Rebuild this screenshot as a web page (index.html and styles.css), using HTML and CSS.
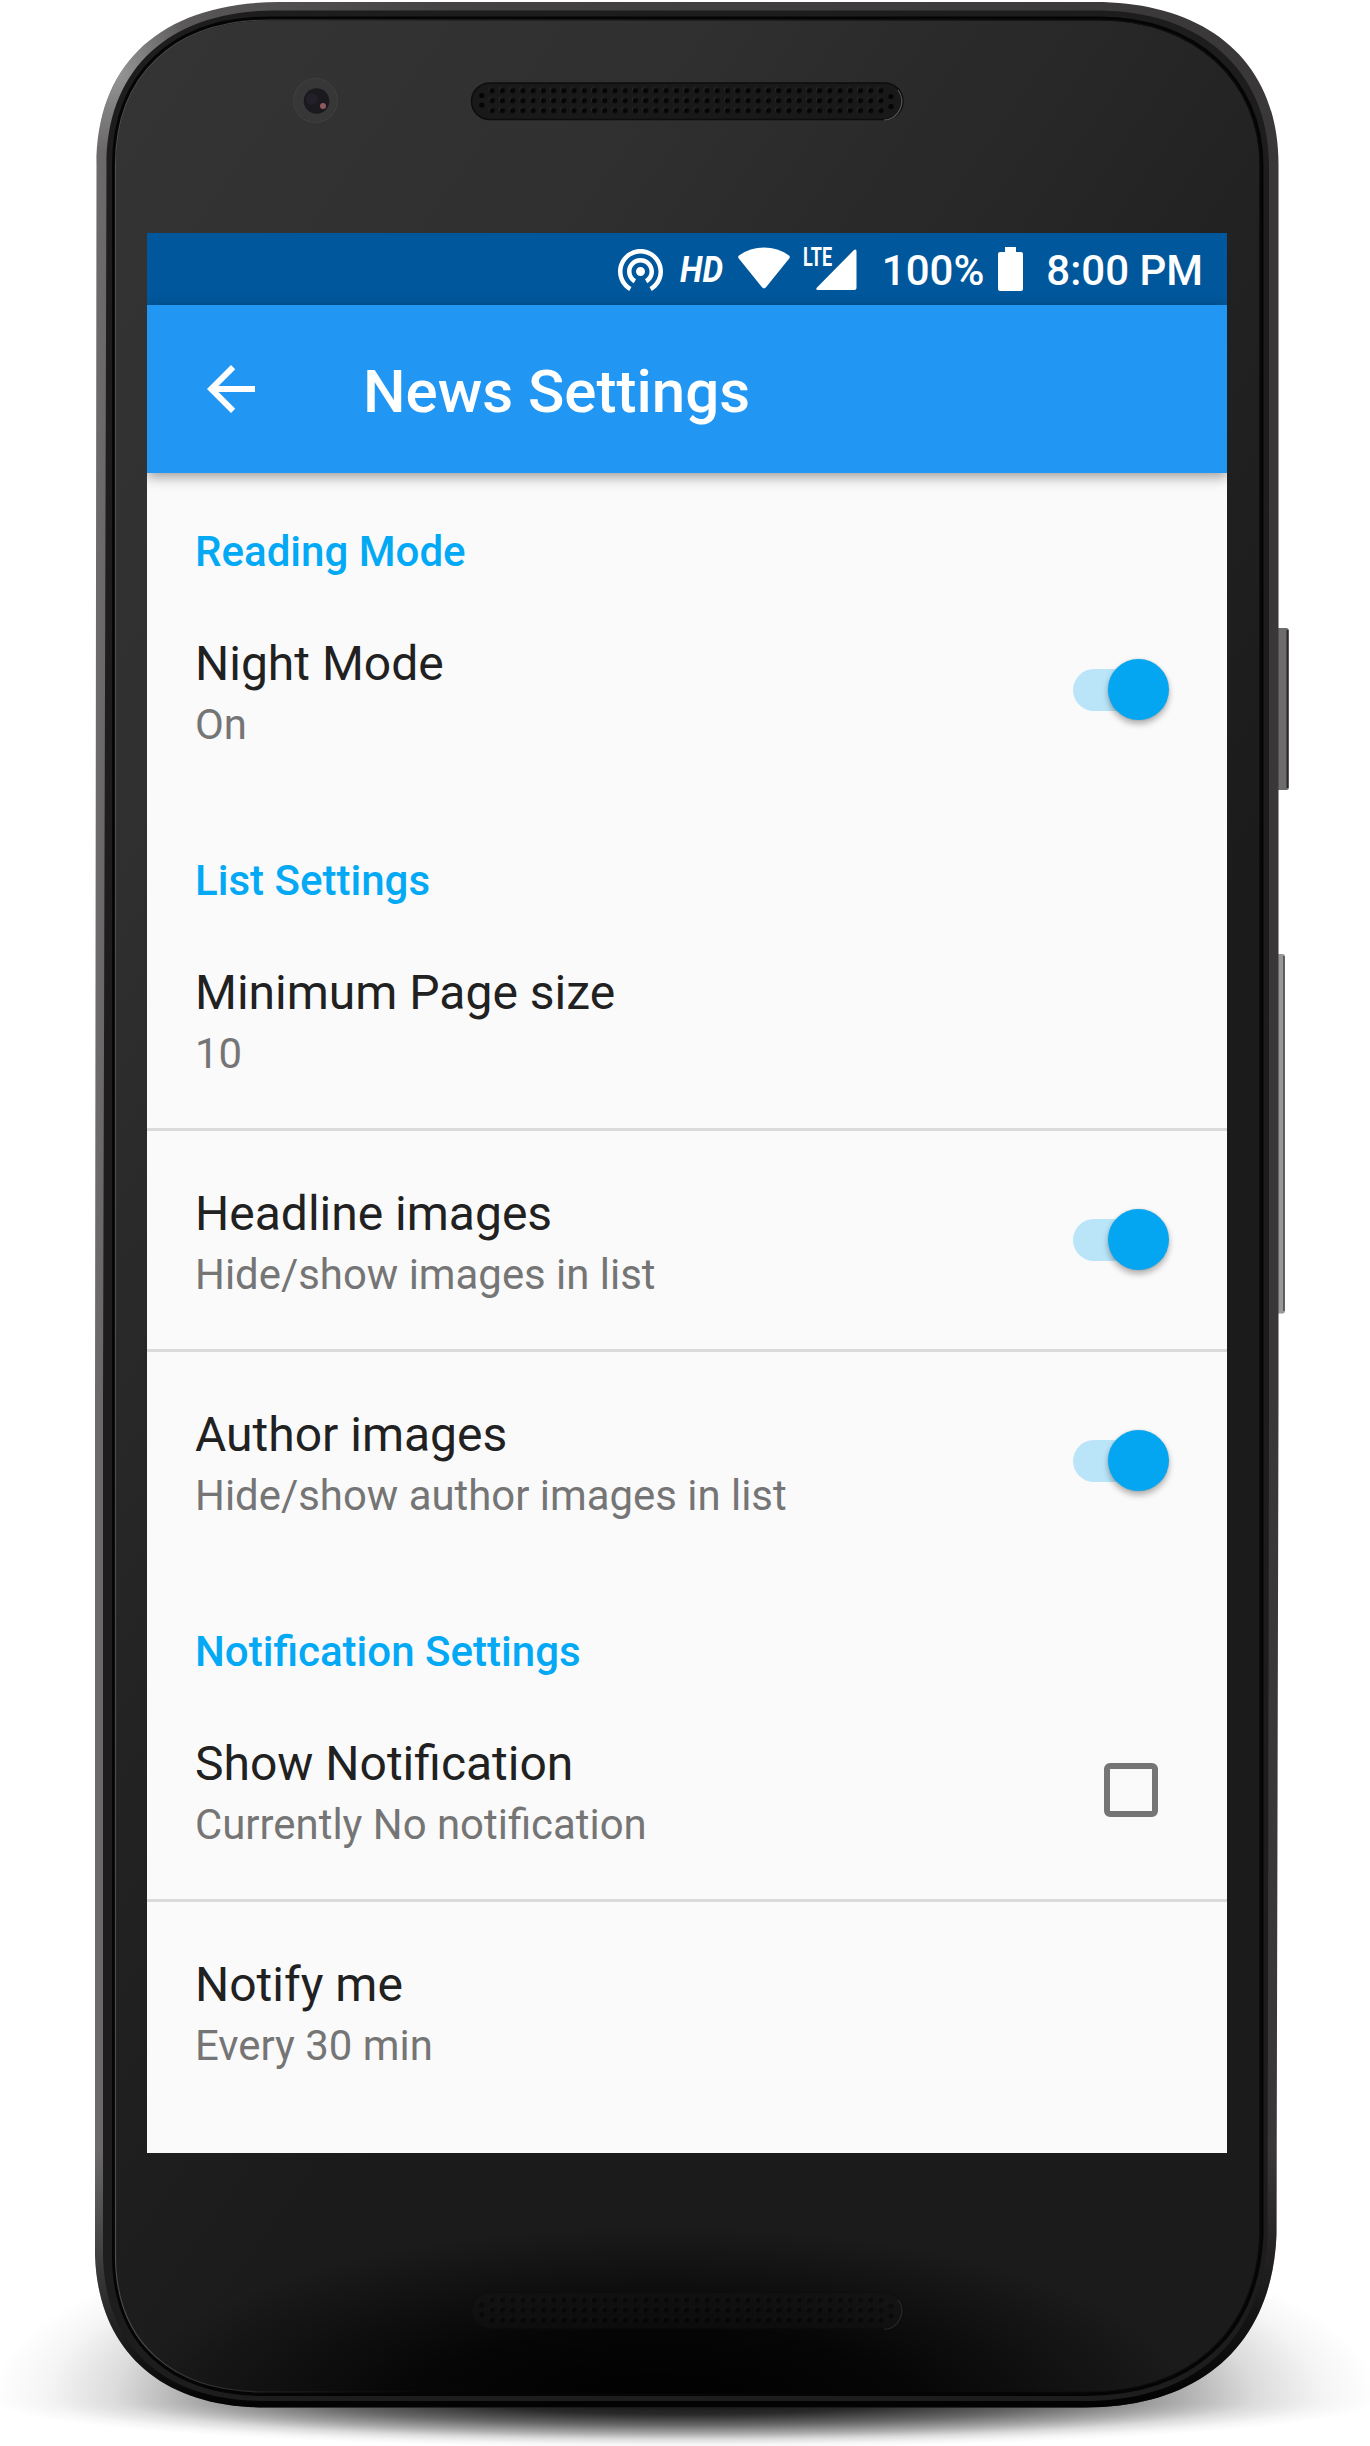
FILE: index.html
```html
<!DOCTYPE html>
<html lang="en">
<head>
<meta charset="utf-8">
<title>News Settings</title>
<link rel="stylesheet" href="styles.css">
</head>
<body>
<div class="device">
  <svg class="body" viewBox="0 0 1370 2446" aria-hidden="true">
    <defs>
      <radialGradient id="shade">
        <stop offset="0" stop-opacity=".95"/>
        <stop offset=".3" stop-opacity=".84"/>
        <stop offset=".52" stop-opacity=".6"/>
        <stop offset=".7" stop-opacity=".34"/>
        <stop offset=".82" stop-opacity=".14"/>
        <stop offset=".92" stop-opacity=".04"/>
        <stop offset="1" stop-opacity="0"/>
      </radialGradient>
      <linearGradient id="rim" x1="0" x2="1" y1="0" y2="0">
        <stop offset="0" stop-color="#6c6a6b"/>
        <stop offset=".1" stop-color="#565455"/>
        <stop offset=".3" stop-color="#444243"/>
        <stop offset="1" stop-color="#3a3738"/>
      </linearGradient>
      <linearGradient id="rimFade" x1="0" x2="0" y1="2150" y2="2400" gradientUnits="userSpaceOnUse">
        <stop offset="0" stop-opacity="0"/>
        <stop offset="1" stop-opacity=".95"/>
      </linearGradient>
      <radialGradient id="glint" cx="116" cy="72" r="80" gradientUnits="userSpaceOnUse">
        <stop offset="0" stop-color="#aaa" stop-opacity=".7"/>
        <stop offset="1" stop-color="#aaa" stop-opacity="0"/>
      </radialGradient>
      <linearGradient id="glass" x1="100" y1="100" x2="1250" y2="900" gradientUnits="userSpaceOnUse">
        <stop offset="0" stop-color="#343435"/>
        <stop offset=".3" stop-color="#303030"/>
        <stop offset=".75" stop-color="#212121"/>
        <stop offset="1" stop-color="#1b1b1b"/>
      </linearGradient>
      <linearGradient id="edge" x1="0" x2="1" y1="0" y2="0">
        <stop offset="0" stop-color="#4c4c4c"/>
        <stop offset=".3" stop-color="#2c2c2c"/>
        <stop offset="1" stop-color="#0c0c0c"/>
      </linearGradient>
      <radialGradient id="dark">
        <stop offset="0" stop-opacity="1"/>
        <stop offset=".45" stop-opacity=".8"/>
        <stop offset="1" stop-opacity="0"/>
      </radialGradient>
      <clipPath id="above"><rect width="1370" height="2400"/></clipPath>
      <clipPath id="below"><rect y="2400" width="1370" height="46"/></clipPath>
      <clipPath id="shellClip"><path d="M96.500 165C96.500 60 165 2 280 2H1095V1400H96.500Z"/></clipPath>
      <clipPath id="glassClip"><path d="M115 165C115 75 172 19.500 270 19.500H1100C1195 19.500 1260.500 80 1260.500 165V2235C1256 2335 1190 2393 1085 2393H265C172 2393 115 2345 115 2255Z"/></clipPath>
      <pattern id="holes" x="486.900" y="85.500" width="10.230" height="10" patternUnits="userSpaceOnUse">
        <circle cx="4.500" cy="4.300" r="2.500" fill="#353535"/>
        <circle cx="5.200" cy="5" r="2.700" fill="#060606"/>
      </pattern>
      <g id="speaker">
        <rect x="471.500" y="83" width="431.500" height="36.500" rx="18.250" fill="#191919" stroke="#0d0d0d" stroke-width="1.500"/>
        <path d="M884 120A18.700 18.700 0 0 0 898 90" fill="none" stroke="#555" stroke-width="1.200"/>
        <rect x="486.900" y="85.500" width="398.900" height="30" fill="url(#holes)"/>
        <g fill="#050505">
          <circle cx="481.800" cy="95.500" r="2.600"/><circle cx="481.800" cy="105" r="2.600"/>
          <circle cx="891" cy="96.500" r="2.600"/><circle cx="891" cy="106.500" r="2.600"/>
        </g>
      </g>
    </defs>

    <ellipse cx="685" cy="2400" rx="695" ry="205" fill="url(#shade)" clip-path="url(#above)"/>
    <ellipse cx="685" cy="2400" rx="695" ry="48" fill="url(#shade)" clip-path="url(#below)"/>

    <rect x="1276" y="628" width="12.800" height="162" rx="2.500" fill="#6d6b6c"/>
    <path d="M1287.500 630V788" stroke="#2a2829" stroke-width="2"/>
    <rect x="1276" y="954" width="8.800" height="359.500" rx="2" fill="#999798"/>
    <path d="M1284 956V1311" stroke="#4a4849" stroke-width="1.500"/>

    <path fill="url(#rim)" d="M96.500 165C96.500 60 165 2 280 2H1095C1200 2 1278.500 55 1278.500 165V1400L1276.500 2235C1272 2345 1200 2407.500 1085 2407.500H265C160 2407.500 98 2350 95 2255V1400Z"/>
    <rect x="90" width="200" height="165" fill="url(#glint)" clip-path="url(#shellClip)"/>
    <path fill="url(#rimFade)" d="M95 2150H1277L1276.500 2235C1272 2345 1200 2407.500 1085 2407.500H265C160 2407.500 98 2350 95 2255Z"/>
    <path fill="#1d1d1d" d="M106.500 165C106.500 68 170 10.500 275 10.500H1098C1198 10.500 1269 68 1269 165V1400L1267.500 2235C1263 2340 1195 2401 1085 2401H265C166 2401 105 2350 103 2255V1400Z"/>
    <path fill="url(#glass)" stroke="#050505" stroke-width="4" d="M114 165C114 75 172 18.500 270 18.500H1100C1195 18.500 1261.500 80 1261.500 165V2235C1257 2335 1190 2394 1085 2394H265C172 2394 114 2345 114 2255Z"/>
    <path fill="none" stroke="url(#edge)" stroke-width="1.200" d="M115.500 165C115.500 76 173 20 270 20H1100C1194 20 1260 81 1260 165V2235C1255 2334 1189 2392 1085 2392H265C173 2392 115.500 2344 115.500 2255Z"/>
    <ellipse cx="660" cy="2410" rx="540" ry="185" fill="url(#dark)" clip-path="url(#glassClip)"/>

    <use href="#speaker"/>
    <use href="#speaker" y="2209.500" opacity=".35"/>
    <circle cx="315.500" cy="100.500" r="22" fill="#373738" stroke="#404041"/>
    <circle cx="316.500" cy="101" r="12.800" fill="#1a191e"/>
    <circle cx="312" cy="99" r="6" fill="#231f29"/>
    <circle cx="323" cy="106" r="3" fill="#8f5a5c"/>
  </svg>

  <main class="screen">
    <header class="status">
      <svg class="i-cast" viewBox="2 3 20 18.650"><path d="M12 11c-1.100 0-2 .9-2 2s.9 2 2 2 2-.9 2-2-.9-2-2-2zm6 2c0-3.310-2.690-6-6-6s-6 2.690-6 6c0 2.220 1.210 4.150 3 5.190l1-1.740c-1.190-.7-2-1.970-2-3.450 0-2.210 1.790-4 4-4s4 1.790 4 4c0 1.480-.81 2.750-2 3.450l1 1.740c1.790-1.040 3-2.970 3-5.190zM12 3C6.480 3 2 7.480 2 13c0 3.700 2.010 6.920 4.990 8.650l1-1.730C5.610 18.530 4 15.960 4 13c0-4.420 3.580-8 8-8s8 3.580 8 8c0 2.960-1.610 5.530-4 6.920l1 1.730c2.990-1.730 5-4.950 5-8.650 0-5.520-4.480-10-10-10z"/></svg>
      <svg class="i-hd" viewBox="0 0 46 44"><text x="0" y="34.500" font-size="37" font-weight="700" font-style="italic" textLength="43" lengthAdjust="spacingAndGlyphs">HD</text></svg>
      <svg class="i-wifi" viewBox="0 0 52 42"><path d="M1 8.500C15 -2.300 37 -2.300 51 8.500Q52.500 9.800 51.200 11.600L28 40.300Q26 42.500 24 40.300L.8 11.600Q-.5 9.800 1 8.500Z"/></svg>
      <svg class="i-lte" viewBox="0 0 53 42"><text x="-1" y="18" font-size="26" font-weight="700" textLength="29" lengthAdjust="spacingAndGlyphs">LTE</text><path d="M49.500 2.500Q52.500 .2 52.500 3.500V39.500Q52.500 42 50 42H14Q11 42 13 39.500Z"/></svg>
      <span class="percent">100%</span>
      <svg class="i-batt" viewBox="0 0 25 44"><path d="M7 0H18V5H23Q25 5 25 7V42Q25 44 23 44H2Q0 44 0 42V7Q0 5 2 5H7Z"/></svg>
      <span class="clock">8:00 PM</span>
    </header>
    <nav class="appbar">
      <svg class="back" viewBox="0 0 24 24"><path d="M20 11H7.830l5.590-5.590L12 4l-8 8 8 8 1.410-1.410L7.830 13H20v-2z"/></svg>
      <h1>News Settings</h1>
    </nav>
    <div class="list">
      <h2>Reading Mode</h2>
      <div class="row">
        <div class="label"><p class="name">Night Mode</p><p class="note">On</p></div>
        <span class="switch"></span>
      </div>
      <h2>List Settings</h2>
      <div class="row ruled">
        <div class="label"><p class="name">Minimum Page size</p><p class="note">10</p></div>
      </div>
      <div class="row ruled">
        <div class="label"><p class="name">Headline images</p><p class="note">Hide/show images in list</p></div>
        <span class="switch"></span>
      </div>
      <div class="row">
        <div class="label"><p class="name">Author images</p><p class="note">Hide/show author images in list</p></div>
        <span class="switch"></span>
      </div>
      <h2>Notification Settings</h2>
      <div class="row ruled">
        <div class="label"><p class="name">Show Notification</p><p class="note">Currently No notification</p></div>
        <span class="checkbox"></span>
      </div>
      <div class="row">
        <div class="label"><p class="name">Notify me</p><p class="note">Every 30 min</p></div>
      </div>
    </div>
  </main>
</div>
</body>
</html>
```
FILE: styles.css
```css
* {
  box-sizing: border-box;
}

body {
  margin: 0;
  background: #fff;
  font-family: Roboto, "Liberation Sans", sans-serif;
}

h1, h2, p {
  margin: 0;
}

.device {
  display: grid;
  width: 1370px;
  height: 2446px;
  overflow: hidden;
}

.body {
  grid-area: 1 / 1;
  width: 1370px;
  height: 2446px;
}

.screen {
  grid-area: 1 / 1;
  position: relative;
  display: flex;
  flex-direction: column;
  width: 1080px;
  height: 1920px;
  margin: 233px 0 0 147px;
  overflow: hidden;
  background: #fafafa;
}

.status {
  display: flex;
  flex: none;
  align-items: flex-start;
  justify-content: flex-end;
  height: 72px;
  padding-right: 24px;
  background: #01579b;
  color: #fff;
  fill: #fff;
  font-size: 42px;
  font-weight: 500;
  line-height: 72px;
}

.status svg {
  flex: none;
}

.i-cast {
  width: 45px;
  height: 42px;
  margin: 15.500px 17px 0 0;
}

.i-hd {
  width: 46px;
  height: 44px;
  margin: 14px 12px 0 0;
  overflow: visible;
}

.i-wifi {
  width: 52px;
  height: 42px;
  margin: 14px 14px 0 0;
}

.i-lte {
  width: 53px;
  height: 42px;
  margin: 15px 25px 0 0;
  overflow: visible;
}

.percent {
  padding-top: 2px;
}

.i-batt {
  width: 25px;
  height: 44px;
  margin: 14px 23px 0 14px;
}

.clock {
  padding-top: 2px;
}

.appbar {
  position: relative;
  display: flex;
  flex: none;
  align-items: center;
  height: 168px;
  padding-left: 48px;
  background: #2196f3;
  box-shadow: 0 4px 12px rgba(0, 0, 0, .38);
  color: #fff;
}

.back {
  width: 72px;
  height: 72px;
  fill: #fff;
}

h1 {
  margin-left: 96px;
  padding-top: 5px;
  font-size: 60px;
  font-weight: 500;
  line-height: 70px;
}

h2 {
  height: 108px;
  padding: 52px 48px 0;
  color: #03a9f4;
  font-size: 42.05px;
  font-weight: 500;
  line-height: 54px;
}

.row {
  display: flex;
  align-items: center;
  justify-content: space-between;
  height: 221px;
  padding: 0 58px 0 48px;
  border-bottom: 3px solid transparent;
}

.ruled {
  border-bottom-color: #dadada;
}

.label {
  padding-top: 6px;
}

.name {
  color: #212121;
  font-size: 48px;
  line-height: 56px;
}

.note {
  margin-top: 8px;
  color: #757575;
  font-size: 41.9px;
  line-height: 50px;
}

.switch {
  display: flex;
  align-items: center;
  justify-content: flex-end;
  width: 96px;
  height: 42px;
  margin-bottom: 1px;
  border-radius: 21px;
  background: linear-gradient(90deg, #bae5f9 70px, transparent 70px);
}

.switch::before {
  content: "";
  width: 61px;
  height: 61px;
  flex: none;
  border-radius: 50%;
  background: #04a6f1;
  box-shadow: 0 4px 6px rgba(0, 0, 0, .3), 0 0 2px rgba(0, 0, 0, .15);
}

.checkbox {
  width: 54px;
  height: 54px;
  margin-right: 11px;
  border: 6px solid #757575;
  border-radius: 6px;
}
```
